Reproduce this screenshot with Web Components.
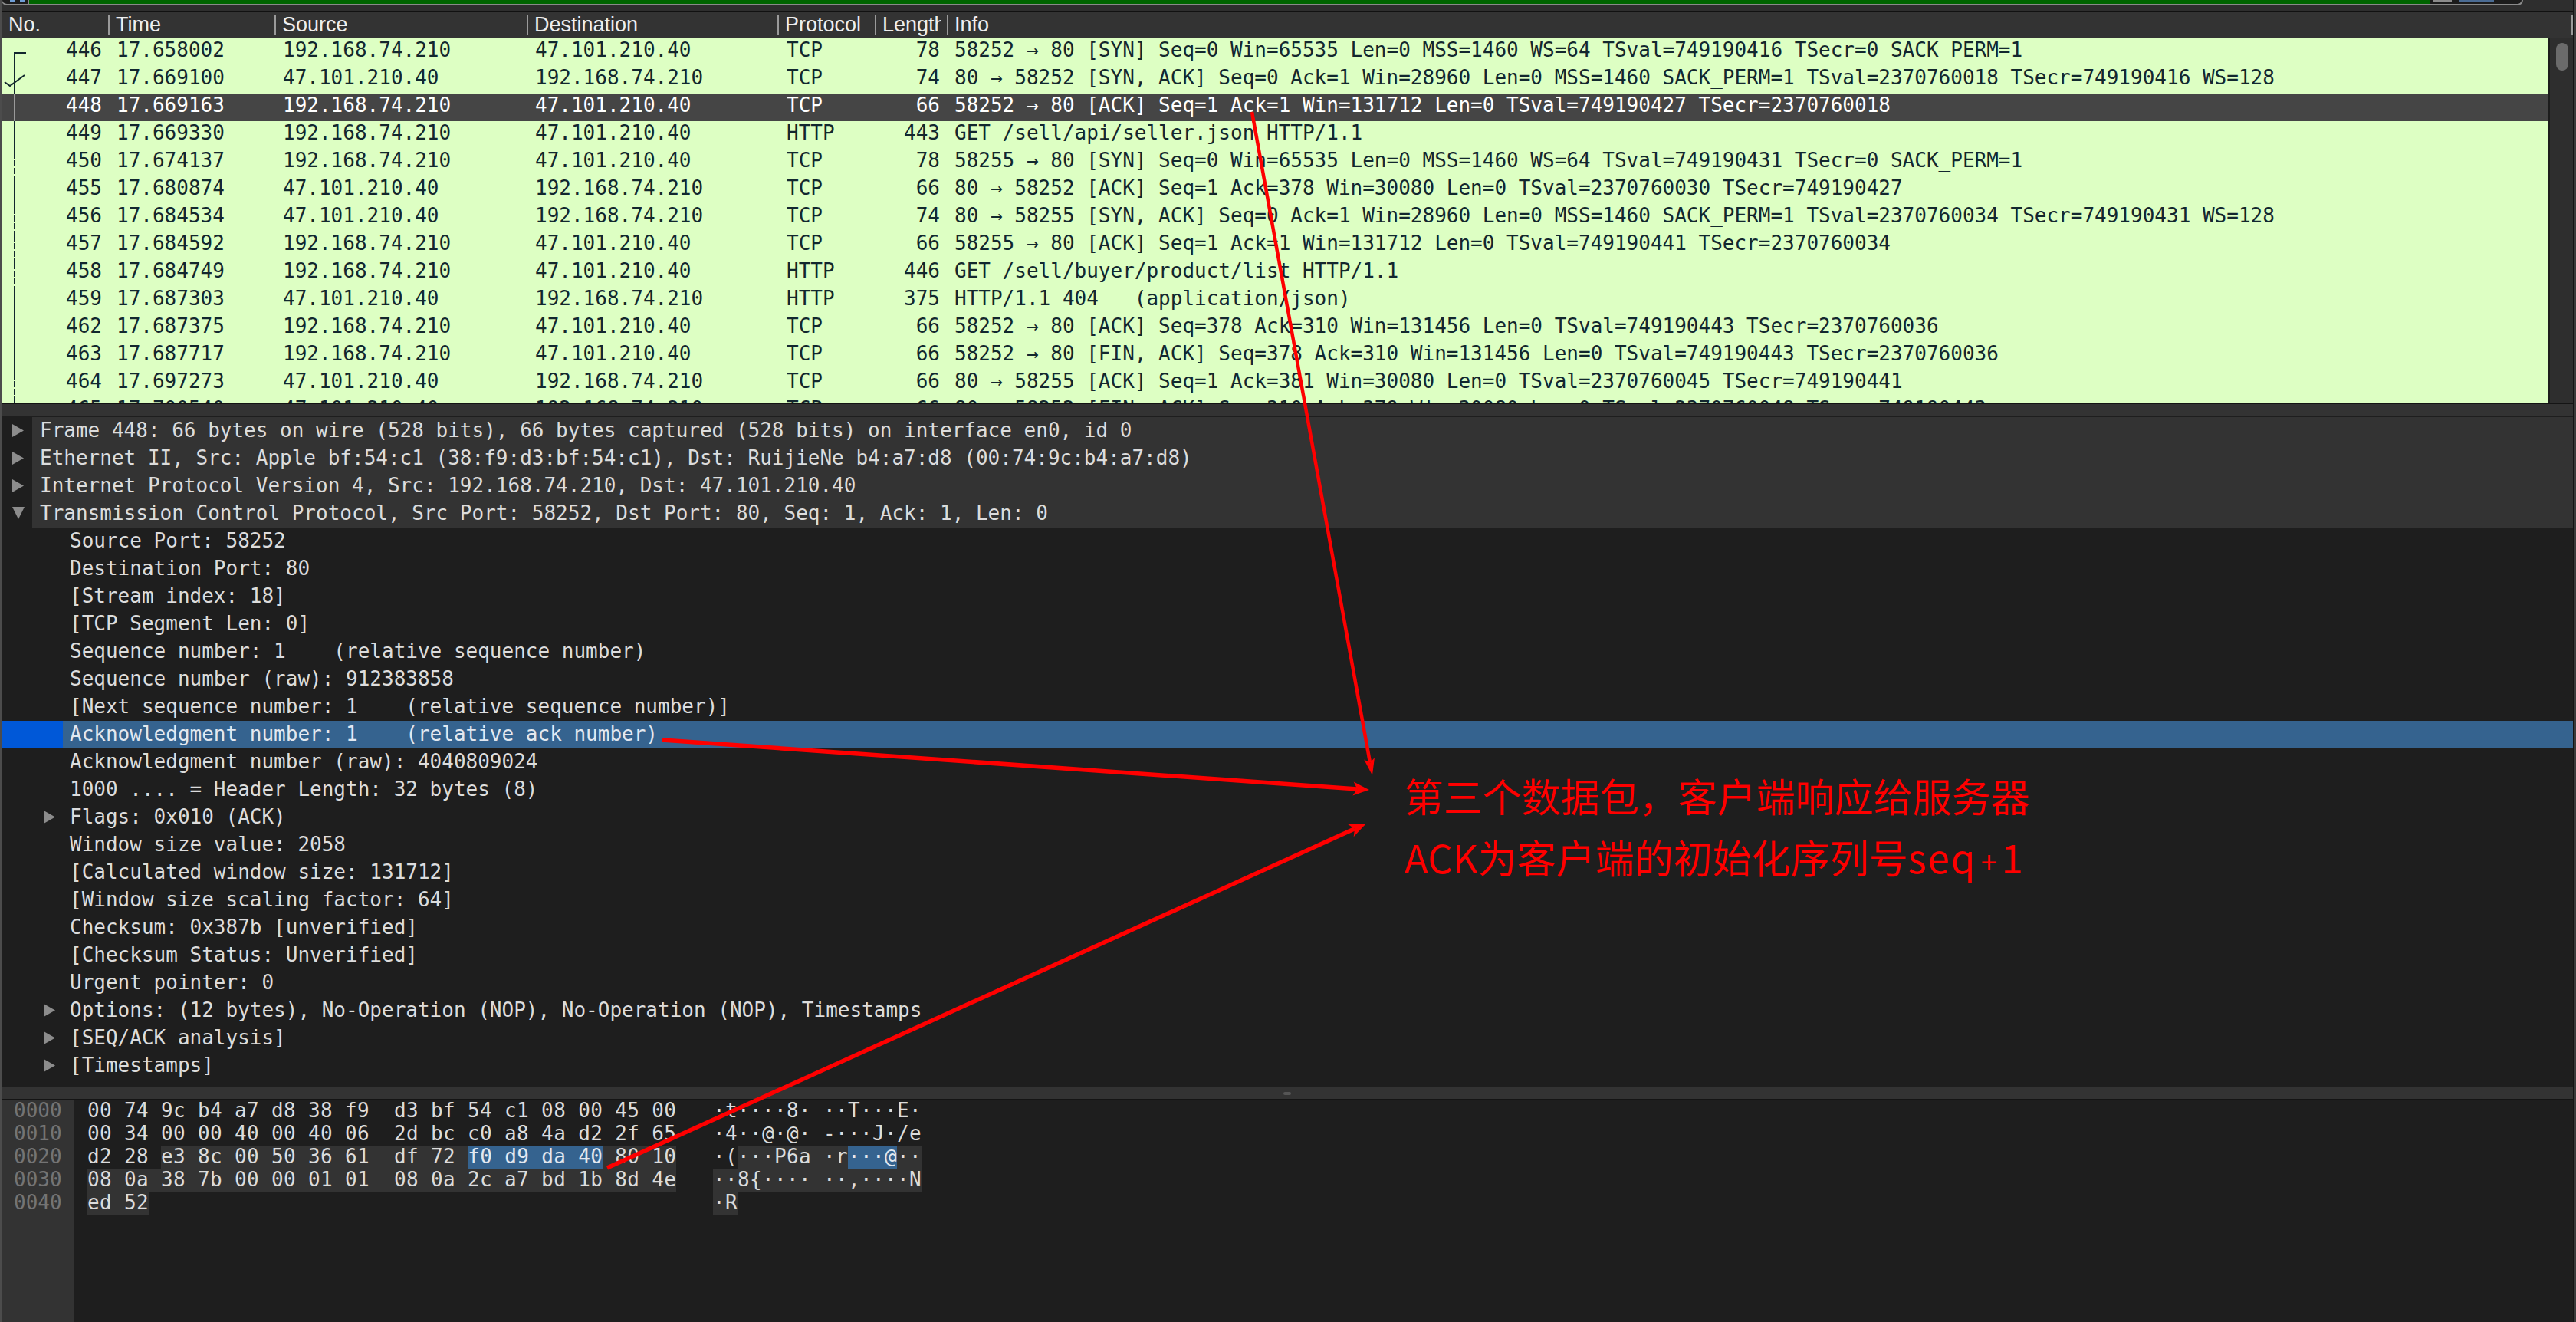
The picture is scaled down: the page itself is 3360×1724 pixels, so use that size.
<!DOCTYPE html>
<html lang="zh">
<head>
<meta charset="utf-8">
<title>Wireshark</title>
<style>
  html, body { margin: 0; padding: 0; background: #1e1e1e; }
</style>
</head>
<body>
<ws-app>
  <ws-progress></ws-progress>
  <ws-packet-list></ws-packet-list>
  <ws-splitter></ws-splitter>
  <ws-tree>
    <ws-tree-row toggle="closed" band>Frame 448: 66 bytes on wire (528 bits), 66 bytes captured (528 bits) on interface en0, id 0</ws-tree-row>
    <ws-tree-row toggle="closed" band>Ethernet II, Src: Apple_bf:54:c1 (38:f9:d3:bf:54:c1), Dst: RuijieNe_b4:a7:d8 (00:74:9c:b4:a7:d8)</ws-tree-row>
    <ws-tree-row toggle="closed" band>Internet Protocol Version 4, Src: 192.168.74.210, Dst: 47.101.210.40</ws-tree-row>
    <ws-tree-row toggle="open" band>Transmission Control Protocol, Src Port: 58252, Dst Port: 80, Seq: 1, Ack: 1, Len: 0</ws-tree-row>
    <ws-tree-row child>Source Port: 58252</ws-tree-row>
    <ws-tree-row child>Destination Port: 80</ws-tree-row>
    <ws-tree-row child>[Stream index: 18]</ws-tree-row>
    <ws-tree-row child>[TCP Segment Len: 0]</ws-tree-row>
    <ws-tree-row child>Sequence number: 1    (relative sequence number)</ws-tree-row>
    <ws-tree-row child>Sequence number (raw): 912383858</ws-tree-row>
    <ws-tree-row child>[Next sequence number: 1    (relative sequence number)]</ws-tree-row>
    <ws-tree-row child selected>Acknowledgment number: 1    (relative ack number)</ws-tree-row>
    <ws-tree-row child>Acknowledgment number (raw): 4040809024</ws-tree-row>
    <ws-tree-row child>1000 .... = Header Length: 32 bytes (8)</ws-tree-row>
    <ws-tree-row child toggle="closed">Flags: 0x010 (ACK)</ws-tree-row>
    <ws-tree-row child>Window size value: 2058</ws-tree-row>
    <ws-tree-row child>[Calculated window size: 131712]</ws-tree-row>
    <ws-tree-row child>[Window size scaling factor: 64]</ws-tree-row>
    <ws-tree-row child>Checksum: 0x387b [unverified]</ws-tree-row>
    <ws-tree-row child>[Checksum Status: Unverified]</ws-tree-row>
    <ws-tree-row child>Urgent pointer: 0</ws-tree-row>
    <ws-tree-row child toggle="closed">Options: (12 bytes), No-Operation (NOP), No-Operation (NOP), Timestamps</ws-tree-row>
    <ws-tree-row child toggle="closed">[SEQ/ACK analysis]</ws-tree-row>
    <ws-tree-row child toggle="closed">[Timestamps]</ws-tree-row>
  </ws-tree>
  <ws-splitter grip></ws-splitter>
  <ws-hex></ws-hex>
</ws-app>
<ws-annotation></ws-annotation>

<script>
const MONO = '"DejaVu Sans Mono", "Liberation Mono", monospace';
const A = '192.168.74.210';
const B = '47.101.210.40';

// no, time, source, destination, protocol, length, info
const PACKETS = [
  ['446', '17.658002', A, B, 'TCP', '78', '58252 → 80 [SYN] Seq=0 Win=65535 Len=0 MSS=1460 WS=64 TSval=749190416 TSecr=0 SACK_PERM=1'],
  ['447', '17.669100', B, A, 'TCP', '74', '80 → 58252 [SYN, ACK] Seq=0 Ack=1 Win=28960 Len=0 MSS=1460 SACK_PERM=1 TSval=2370760018 TSecr=749190416 WS=128'],
  ['448', '17.669163', A, B, 'TCP', '66', '58252 → 80 [ACK] Seq=1 Ack=1 Win=131712 Len=0 TSval=749190427 TSecr=2370760018'],
  ['449', '17.669330', A, B, 'HTTP', '443', 'GET /sell/api/seller.json HTTP/1.1'],
  ['450', '17.674137', A, B, 'TCP', '78', '58255 → 80 [SYN] Seq=0 Win=65535 Len=0 MSS=1460 WS=64 TSval=749190431 TSecr=0 SACK_PERM=1'],
  ['455', '17.680874', B, A, 'TCP', '66', '80 → 58252 [ACK] Seq=1 Ack=378 Win=30080 Len=0 TSval=2370760030 TSecr=749190427'],
  ['456', '17.684534', B, A, 'TCP', '74', '80 → 58255 [SYN, ACK] Seq=0 Ack=1 Win=28960 Len=0 MSS=1460 SACK_PERM=1 TSval=2370760034 TSecr=749190431 WS=128'],
  ['457', '17.684592', A, B, 'TCP', '66', '58255 → 80 [ACK] Seq=1 Ack=1 Win=131712 Len=0 TSval=749190441 TSecr=2370760034'],
  ['458', '17.684749', A, B, 'HTTP', '446', 'GET /sell/buyer/product/list HTTP/1.1'],
  ['459', '17.687303', B, A, 'HTTP', '375', 'HTTP/1.1 404   (application/json)'],
  ['462', '17.687375', A, B, 'TCP', '66', '58252 → 80 [ACK] Seq=378 Ack=310 Win=131456 Len=0 TSval=749190443 TSecr=2370760036'],
  ['463', '17.687717', A, B, 'TCP', '66', '58252 → 80 [FIN, ACK] Seq=378 Ack=310 Win=131456 Len=0 TSval=749190443 TSecr=2370760036'],
  ['464', '17.697273', B, A, 'TCP', '66', '80 → 58255 [ACK] Seq=1 Ack=381 Win=30080 Len=0 TSval=2370760045 TSecr=749190441'],
  ['465', '17.700540', B, A, 'TCP', '66', '80 → 58252 [FIN, ACK] Seq=310 Ack=379 Win=30080 Len=0 TSval=2370760048 TSecr=749190443'],
];

class WsApp extends HTMLElement {
  connectedCallback() {
    this.attachShadow({ mode: 'open' }).innerHTML = `
      <style>
        :host { display: block; width: 3360px; height: 1724px; overflow: hidden; box-sizing: border-box;
                border-left: 2px solid #4c4c4c; border-right: 2px solid #3a3a3a; background: #1e1e1e; }
        .inner { display: flex; flex-direction: column; height: 100%; border-right: 2px solid #141414; }
      </style>
      <div class="inner"><slot></slot></div>`;
  }
}

class WsProgress extends HTMLElement {
  connectedCallback() {
    this.attachShadow({ mode: 'open' }).innerHTML = `
      <style>
        :host { display: flex; flex: none; height: 15px; flex-direction: column; background: #2e2e2e; border-bottom: 1px solid #111; box-sizing: border-box; }
        .bar { display: flex; height: 7px; }
        .cap { width: 34px; background: #1c1c1c; border-bottom: 2px solid #8a8a8a; border-left: 1px solid #8a8a8a;
               border-bottom-left-radius: 8px; box-sizing: border-box; display: flex; gap: 7px; padding-left: 10px; }
        .cap i { width: 6px; height: 2px; background: #6f9fd8; }
        .green { flex: 1; background: #006400; border-bottom: 2px solid #8a8a8a; border-left: 2px solid #8a8a8a; box-sizing: border-box; }
        .end { width: 121px; background: #1c1c1c; border-bottom: 2px solid #8a8a8a; border-right: 2px solid #8a8a8a;
               border-bottom-right-radius: 8px; box-sizing: border-box; display: flex; padding-left: 3px; }
        .end i { height: 2px; }
        .rest { width: 65px; }
      </style>
      <div class="bar">
        <div class="cap"><i></i><i></i></div>
        <div class="green"></div>
        <div class="end"><i style="width:25px;background:#8c8c8c"></i><i style="width:46px;margin-left:9px;background:#4b6c94"></i></div>
        <div class="rest"></div>
      </div>`;
  }
}

class WsPacketList extends HTMLElement {
  connectedCallback() {
    const root = this.attachShadow({ mode: 'open' });
    const heads = ['No.', 'Time', 'Source', 'Destination', 'Protocol', 'Length', 'Info'];
    const cls = ['no', 'time', 'src', 'dst', 'proto', 'len', 'info'];
    const rows = PACKETS.map((p, i) =>
      `<div class="row${i == 2 ? ' sel' : ''}">` + p.map((t, k) => `<span class="${cls[k]}">${t}</span>`).join('') + `</div>`
    ).join('');

    // conversation marks drawn over the first column
    const dashed = [4, 6, 7, 8, 12];
    let gaps = '';
    dashed.forEach(r => {
      [13, 23, 33].forEach(o => { gaps += `<rect x="16" y="${r * 36 + o}" width="6" height="2" fill="#ddffc3"/>`; });
    });

    root.innerHTML = `
      <style>
        :host { display: block; flex: none; height: 511px; position: relative; overflow: hidden; }
        .head { display: grid; grid-template-columns: var(--cols); height: 35px; background: #333; font: 27px "Liberation Sans", Arial, sans-serif; color: #eee; line-height: 35px; position: relative; }
        .head span { position: relative; padding-left: 10px; white-space: nowrap; overflow: hidden; }
        .head span + span::before { content: ""; position: absolute; left: 0; top: 4px; height: 26px; width: 2px; background: #9a9a9a; }
        .head .no { padding-left: 9px; }
        .head .len { margin-right: 7px; }
        .head .bar { position: absolute; right: 0; top: 4px; width: 2px; height: 26px; background: #9a9a9a; }
        .body { display: flex; height: 476px; }
        .rows { width: 3322px; overflow: hidden; position: relative; background: #ddffc3; }
        .row { display: grid; grid-template-columns: var(--cols); height: 36px; overflow: hidden;
               font: 26px/30px ${MONO}; color: #12272e; white-space: pre; }
        .row span { padding-left: 10px; }
        .row.sel { background: #454545; color: #fff; }
        .row .no, .row .len { text-align: right; padding: 0 8px 0 0; }
        .row .time, .row .src, .row .dst { padding-left: 11px; }
        .row .proto { padding-left: 12px; }
        .row .len { padding-right: 9px; }
        .scroll { flex: 1; border-left: 2px solid #1c1c1c; background: #2e2e2e; position: relative; }
        .thumb { position: absolute; left: 8px; top: 6px; width: 16px; height: 36px; border-radius: 8px; background: #6b6b6b; }
        svg { position: absolute; left: 0; top: 0; }
        :host { --cols: 139px 217px 329px 327px 127px 94px 1fr; }
      </style>
      <div class="head">${heads.map((h, k) => `<span class="${cls[k]}">${h}</span>`).join('')}<i class="bar"></i></div>
      <div class="body">
        <div class="rows">
          ${rows}
          <svg width="40" height="476" viewBox="0 0 40 476">
            <path d="M32 19H17V476" fill="none" stroke="#12272e" stroke-width="2"/>
            <path d="M4 57L11 62L30 48" fill="none" stroke="#12272e" stroke-width="2"/>
            <rect x="16" y="72" width="2" height="36" fill="#9a9a9a"/>
            ${gaps}
          </svg>
        </div>
        <div class="scroll"><div class="thumb"></div></div>
      </div>`;
  }
}

class WsSplitter extends HTMLElement {
  connectedCallback() {
    this.attachShadow({ mode: 'open' }).innerHTML = `
      <style>
        :host { display: flex; flex: none; height: 17px; box-sizing: border-box; background: #333; align-items: center; justify-content: center;
                border-top: 1px solid #141414; border-bottom: 1px solid #141414; }
        i { display: none; width: 10px; height: 4px; border-radius: 2px; background: #555; }
        :host([grip]) i { display: block; }
      </style>
      <i></i>`;
  }
}

class WsTree extends HTMLElement {
  connectedCallback() {
    this.attachShadow({ mode: 'open' }).innerHTML = `
      <style>
        :host { display: block; flex: none; height: 874px; padding-top: 1px; box-sizing: border-box; background: #1e1e1e; overflow: hidden;
                font: 26px/34px ${MONO}; color: #dcdcdc; }
      </style>
      <slot></slot>`;
  }
}

class WsTreeRow extends HTMLElement {
  connectedCallback() {
    const toggle = this.getAttribute('toggle');
    const arrow = toggle == 'open' ? 'M0 0H16L8 16Z' : 'M0 0L15 8.5L0 17Z';
    this.attachShadow({ mode: 'open' }).innerHTML = `
      <style>
        :host { display: block; position: relative; height: 36px; padding-left: 50px; }
        :host([child]) { padding-left: 89px; }
        :host([band]) { background: linear-gradient(90deg, #1e1e1e 40px, #333 40px); }
        :host([selected]) { background: linear-gradient(90deg, #0058d8 80px, #35638f 80px); color: #e2e8f0; }
        svg { position: absolute; left: 14px; top: 9px; }
        :host([child]) svg { left: 55px; }
        .t { white-space: pre; }
      </style>
      ${toggle ? `<svg width="16" height="17" viewBox="0 0 16 17"><path d="${arrow}" fill="#8c8c8c"/></svg>` : ''}
      <div class="t"><slot></slot></div>`;
  }
}

class WsHex extends HTMLElement {
  connectedCallback() {
    const f = t => `<b>${t}</b>`;
    const s = t => `<b class="s">${t}</b>`;
    const hex = [
      '00 74 9c b4 a7 d8 38 f9  d3 bf 54 c1 08 00 45 00',
      '00 34 00 00 40 00 40 06  2d bc c0 a8 4a d2 2f 65',
      'd2 28 ' + f('e3 8c 00 50 36 61  df 72 ') + s('f0 d9 da 40') + f(' 80 10'),
      f('08 0a 38 7b 00 00 01 01  08 0a 2c a7 bd 1b 8d 4e'),
      f('ed 52'),
    ];
    const ascii = [
      '·t····8· ··T···E·',
      '·4··@·@· -···J·/e',
      '·(' + f('···P6a ·r') + s('···@') + f('··'),
      f('··8{···· ··,····N'),
      f('·R'),
    ];
    const lines = arr => arr.map(l => `<div>${l}</div>`).join('');
    this.attachShadow({ mode: 'open' }).innerHTML = `
      <style>
        :host { display: flex; flex: 1; background: #1e1e1e; font: 26px/29px ${MONO}; letter-spacing: .35px; color: #dcdcdc; white-space: pre; }
        .off { width: 78px; padding-left: 16px; background: #333; color: #747474; letter-spacing: 0; }
        .hex { width: 768px; margin-left: 18px; }
        .asc { margin-left: 48px; }
        div div { height: 30px; }
        b { font-weight: normal; display: inline-block; height: 30px; background: #333; vertical-align: top; }
        b.s { background: #35638f; color: #e2e8f0; }
      </style>
      <div class="off">${lines(['0000', '0010', '0020', '0030', '0040'])}</div>
      <div class="hex">${lines(hex)}</div>
      <div class="asc">${lines(ascii)}</div>`;
  }
}

// the red arrows and the note that were pasted on top of the capture
class WsAnnotation extends HTMLElement {
  arrow(x1, y1, x2, y2, w, len, half) {
    const d = Math.hypot(x2 - x1, y2 - y1);
    const ux = (x2 - x1) / d, uy = (y2 - y1) / d;
    const bx = x2 - ux * len, by = y2 - uy * len;
    const nx = bx + ux * len * 0.25, ny = by + uy * len * 0.25;
    const p = [[x2, y2], [bx - uy * half, by + ux * half], [nx, ny], [bx + uy * half, by - ux * half]];
    return `<line x1="${x1}" y1="${y1}" x2="${nx}" y2="${ny}" stroke="#fe0000" stroke-width="${w}"/>
            <polygon points="${p.map(q => q.join(',')).join(' ')}" fill="#fe0000"/>`;
  }
  connectedCallback() {
    this.attachShadow({ mode: 'open' }).innerHTML = `
      <style>
        :host { position: absolute; left: 0; top: 0; width: 3360px; height: 1724px; pointer-events: none; }
        svg { position: absolute; left: 0; top: 0; }
        .note { position: absolute; left: 1832px; top: 997px; color: #fe0000; white-space: pre;
                font: 51px/80px "Noto Sans CJK SC", sans-serif; }
        .lat { letter-spacing: 2px; }
        .plus { font-size: 38px; line-height: 1; padding: 0 6px 0 5px; }
      </style>
      <svg width="3360" height="1724" viewBox="0 0 3360 1724">
        ${this.arrow(1633, 146, 1790, 1011, 4.5, 22, 7)}
        ${this.arrow(864, 965, 1786, 1030, 5.5, 21, 9)}
        ${this.arrow(792, 1523, 1782, 1074, 5.5, 22, 9)}
      </svg>
      <div class="note">第三个数据包，客户端响应给服务器
ACK为客户端的初始化序列号<span class="lat">seq</span><span class="plus">+</span>1</div>`;
  }
}

customElements.define('ws-app', WsApp);
customElements.define('ws-progress', WsProgress);
customElements.define('ws-packet-list', WsPacketList);
customElements.define('ws-splitter', WsSplitter);
customElements.define('ws-tree', WsTree);
customElements.define('ws-tree-row', WsTreeRow);
customElements.define('ws-hex', WsHex);
customElements.define('ws-annotation', WsAnnotation);
</script>
</body>
</html>
